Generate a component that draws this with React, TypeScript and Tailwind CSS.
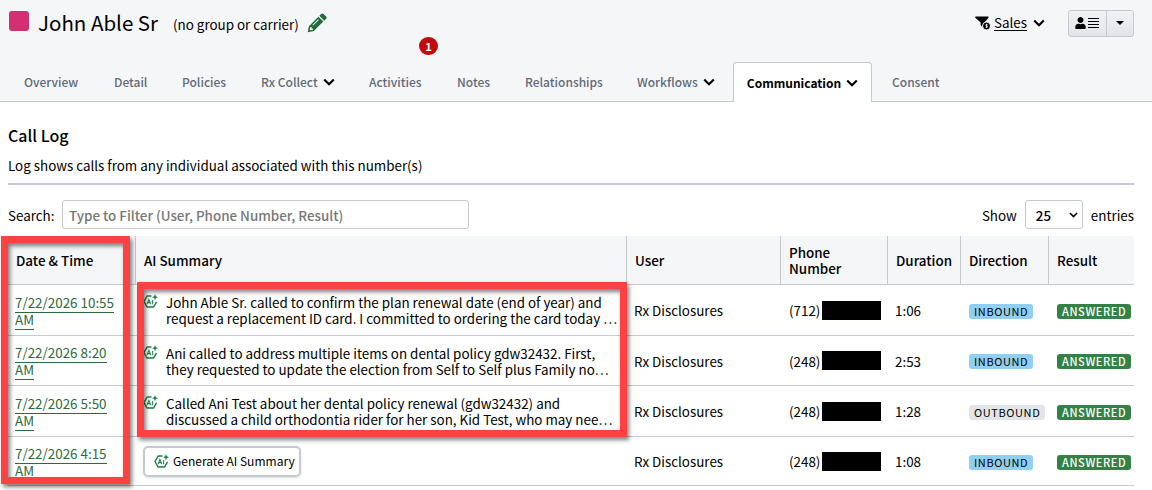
import type { ReactNode } from "react";
import { FaUser } from "react-icons/fa";

type Call = {
  date: string;
  summary?: string[];
  area: string;
  duration: string;
  direction: "INBOUND" | "OUTBOUND";
  height: string;
};

const calls: Call[] = [
  {
    date: "7/22/2026 10:55",
    summary: [
      "John Able Sr. called to confirm the plan renewal date (end of year) and",
      "request a replacement ID card. I committed to ordering the card today …",
    ],
    area: "(712)",
    duration: "1:06",
    direction: "INBOUND",
    height: "h-[51px]",
  },
  {
    date: "7/22/2026 8:20",
    summary: [
      "Ani called to address multiple items on dental policy gdw32432. First,",
      "they requested to update the election from Self to Self plus Family no…",
    ],
    area: "(248)",
    duration: "2:53",
    direction: "INBOUND",
    height: "h-[50px]",
  },
  {
    date: "7/22/2026 5:50",
    summary: [
      "Called Ani Test about her dental policy renewal (gdw32432) and",
      "discussed a child orthodontia rider for her son, Kid Test, who may nee…",
    ],
    area: "(248)",
    duration: "1:28",
    direction: "OUTBOUND",
    height: "h-[51px]",
  },
  {
    date: "7/22/2026 4:15",
    area: "(248)",
    duration: "1:08",
    direction: "INBOUND",
    height: "h-[49px]",
  },
];

const columns = "grid grid-cols-[128px_491px_154px_107px_73px_88px_85px]";

function Chevron({ className }: { className?: string }) {
  return (
    <svg viewBox="0 0 12 8" className={className} fill="none" stroke="currentColor" strokeWidth="2.1">
      <path d="M1.2 1.4 6 6.2l4.8-4.8" />
    </svg>
  );
}

function AiIcon() {
  return (
    <svg viewBox="0 0 16 16" className="h-[15px] w-[15px] shrink-0 text-[#198045]" fill="none" stroke="currentColor">
      <path d="M9 2.2H4.4L1 8l3.4 5.9h6.8L14.4 8.400" strokeWidth="1.5" strokeLinejoin="round" />
      <path d="M12.8 0l.9 2.500 2.300.9-2.300.9-.9 2.500-.9-2.500-2.300-.9 2.300-.9z" fill="currentColor" stroke="none" />
      <path d="M4.300 10.800 6.300 5.700l2 5.100M5 9.200h2.600M10.300 6.400v4.400" strokeWidth="1.1" />
    </svg>
  );
}

function Tab({ label, menu, badge }: { label: string; menu?: boolean; badge?: string }) {
  return (
    <div className="relative flex items-center whitespace-nowrap text-[#5f6b79]">
      {label}
      {menu && <Chevron className="ml-[5px] h-[8px] w-[12px] text-black" />}
      {badge && (
        <span className="absolute -top-[25px] left-[50px] flex h-[18px] w-[19px] items-center justify-center rounded-full bg-[#c30a0e] text-[11px] font-bold text-white">
          {badge}
        </span>
      )}
    </div>
  );
}

function Th({ children, last }: { children: ReactNode; last?: boolean }) {
  return (
    <div className={`flex items-center pl-2 leading-4 ${last ? "" : "border-r border-[#c5c9d0]"}`}>
      {children}
    </div>
  );
}

export default function App() {
  return (
    <div className="relative h-[490px] w-[1152px] overflow-hidden bg-white font-['Noto_Sans_CJK_SC',sans-serif] text-[13.4px] leading-4 text-black">
      <header className="flex h-[102px] flex-col justify-between border-b border-[#c5c9d0] bg-[#f5f6f8]">
        <div className="flex h-[46px] items-center pl-[9px] pr-[18px]">
          <div className="-mt-[4px] h-[20px] w-[20px] rounded-[3px] bg-[#d42f70]" />
          <h1 className="-mt-[3px] ml-[9px] text-[20.500px] leading-6">John Able Sr</h1>
          <span className="ml-[15px] mt-[2px]">(no group or carrier)</span>
          <svg viewBox="0 0 20 20" className="ml-[8px] h-[20px] w-[20px] text-[#236b38]" fill="currentColor">
            <path d="M14.200.9c.7-.7 1.700-.7 2.400 0l2.500 2.500c.7.7.7 1.700 0 2.400l-1.900 1.900-4.900-4.900zM11.400 3.700l4.900 4.900-9.500 9.500L.7 19.300l1.200-6.100zM3.300 14l-.6 3.300 3.300-.6v-1.300H4.600V14zM11.100 6.200l-5.700 5.700.7.7 5.700-5.700z" fillRule="evenodd" />
          </svg>
          <div className="ml-auto flex items-center">
            <svg viewBox="0 0 16 14" className="h-[14px] w-[16px]">
              <path d="M.3.4h13.200v1.300L9.300 6.500V12L5.600 9.300V6.500L.3 1.700z" />
              <circle cx="11.500" cy="10" r="4" stroke="#f5f6f8" />
              <path d="M12.700 8.600h-1.800v1.300h1.400v1.400h-1.800M11.500 7.800v4.300" fill="none" stroke="white" strokeWidth=".7" />
            </svg>
            <span className="ml-[3px] border-b border-black leading-[15px]">Sales</span>
            <Chevron className="ml-[6px] h-[8px] w-[12px]" />
            <div className="ml-[23px] flex h-[27px] w-[66px] rounded-[3px] border border-[#c5c9d0] bg-linear-to-b from-[#f1f2f4] to-[#e2e4e8]">
              <div className="flex w-[38px] items-center gap-[2px] border-r border-[#c5c9d0] pl-[6px]">
                <FaUser className="h-[12px] w-[11px]" />
                <svg viewBox="0 0 11 10" className="h-[10px] w-[11px]" stroke="black">
                  <path d="M0 .5h11M0 3.500h11M0 6.500h11M0 9.500h11" />
                </svg>
              </div>
              <div className="flex flex-1 items-center justify-center">
                <svg viewBox="0 0 8 4" className="h-[4px] w-[8px]"><path d="M0 0h8L4 4z" /></svg>
              </div>
            </div>
          </div>
        </div>
        <nav className="-mb-px grid h-[40px] grid-cols-[90px_68px_79px_108px_88px_68px_112px_96px_139px_60px] pl-6 text-[12px] font-medium">
          <Tab label="Overview" />
          <Tab label="Detail" />
          <Tab label="Policies" />
          <Tab label="Rx Collect" menu />
          <Tab label="Activities" badge="1" />
          <Tab label="Notes" />
          <Tab label="Relationships" />
          <Tab label="Workflows" menu />
          <div className="flex items-center justify-center rounded-t border border-b-0 border-[#c5c9d0] bg-white font-bold">
            Communication
            <Chevron className="ml-[5px] h-[8px] w-[12px]" />
          </div>
          <div className="ml-[20px] flex items-center text-[#5f6b79]">Consent</div>
        </nav>
      </header>

      <main className="ml-2 w-[1126px]">
        <h2 className="pt-[24px] text-[16px] font-medium leading-[18px]">Call Log</h2>
        <p className="mt-[13px]">Log shows calls from any individual associated with this number(s)</p>
        <div className="mt-[10px] h-[2px] bg-[#c5c9d0]" />
        <div className="mt-[15px] flex h-[29px] items-center">
          <span className="w-[54px]">Search:</span>
          <div className="flex h-[29px] w-[407px] items-center rounded-[3px] border border-[#c5c9d0] pl-[6px] font-medium text-[#777]">
            Type to Filter (User, Phone Number, Result)
          </div>
          <span className="ml-auto">Show</span>
          <div className="ml-[8px] flex h-[29px] w-[58px] items-center justify-between rounded-[3px] border border-[#c5c9d0] pl-[10px] pr-[4px] font-medium">
            25
            <Chevron className="h-[6px] w-[9px]" />
          </div>
          <span className="ml-[8px]">entries</span>
        </div>

        <section className="mt-[7px]">
          <div className={`${columns} h-[49px] rounded-t-[4px] border-b border-[#c5c9d0] bg-[#f5f6f8] font-medium`}>
            <Th>Date &amp; Time</Th>
            <Th>AI Summary</Th>
            <Th>User</Th>
            <Th>Phone<br />Number</Th>
            <Th>Duration</Th>
            <Th>Direction</Th>
            <Th last>Result</Th>
          </div>
          {calls.map((call) => (
            <div key={call.date} className={`${columns} ${call.height} items-center border-b border-[#c5c9d0]`}>
              <div className="pl-[7px] pt-px leading-[17px] text-[#2c6a3d]">
                <span className="border-b border-[#2c6a3d]">{call.date}</span>
                <br />
                <span className="border-b border-[#2c6a3d]">AM</span>
              </div>
              <div className="pl-[7px]">
                {call.summary ? (
                  <div className="flex gap-[8px]">
                    <AiIcon />
                    <p className="whitespace-nowrap">
                      {call.summary[0]}
                      <br />
                      {call.summary[1]}
                    </p>
                  </div>
                ) : (
                  <button className="flex h-[31px] w-[158px] items-center gap-[4px] rounded-[5px] border-2 border-[#c5c9d0] pl-[9px] text-[12px] shadow-sm">
                    <AiIcon />
                    Generate AI Summary
                  </button>
                )}
              </div>
              <div className="pl-[7px]">Rx Disclosures</div>
              <div className="flex items-center pl-[8px]">
                <span className="w-[33px]">{call.area}</span>
                <span className="h-[19px] w-[59px] bg-black" />
              </div>
              <div className="pl-[7px]">{call.duration}</div>
              <div className="pl-[8px]">
                <span
                  className={`inline-block h-[15px] rounded-[3px] px-[5px] text-[11px] leading-[15px] tracking-[0.6px] ${
                    call.direction === "INBOUND" ? "bg-[#8fcff1]" : "bg-[#e2e5e8]"
                  }`}
                >
                  {call.direction}
                </span>
              </div>
              <div className="pl-[8px]">
                <span className="inline-block h-[15px] rounded-[3px] bg-[#338144] px-[5px] text-[11px] font-medium leading-[15px] tracking-[0.6px] text-white">
                  ANSWERED
                </span>
              </div>
            </div>
          ))}
        </section>
      </main>

      {/* callout frames over the table */}
      <div className="absolute left-[1px] top-[236px] h-[248px] w-[129px] border-[7px] border-[#ff4141] drop-shadow-[2px_3px_2px_rgba(0,0,0,0.5)]" />
      <div className="absolute left-[137px] top-[282px] h-[155px] w-[490px] border-[7px] border-[#ff4141] drop-shadow-[2px_3px_2px_rgba(0,0,0,0.5)]" />
    </div>
  );
}
